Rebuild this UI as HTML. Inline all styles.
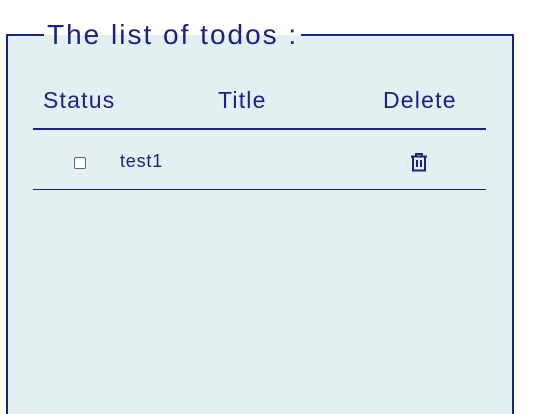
<!DOCTYPE html>
<html><head><style>
html,body{margin:0;padding:0;width:536px;height:406px;background:#fff;overflow:hidden;font-family:"Liberation Sans",sans-serif;color:#1a237e}
.box{position:absolute;left:6px;top:34px;width:508px;height:380px;border:2px solid #1a237e;border-bottom:none;background:#e4eff2;box-sizing:border-box}
.legend{position:absolute;left:44px;top:17px;padding:0 3px;background:linear-gradient(#fff 0 18px,#e4eff2 18px);font-size:28px;line-height:36px;color:#1a237e;letter-spacing:2px}
.t{position:absolute;white-space:nowrap}
.h{font-size:23px;top:87px;letter-spacing:1.2px}
.l1{position:absolute;left:33px;top:128px;width:453px;height:2px;background:#1a237e}
.l2{position:absolute;left:33px;top:189px;width:453px;height:1px;background:#1a237e}
.cb{position:absolute;left:74px;top:157px;width:10px;height:10px;border:1px solid #666;border-radius:2px;background:#fff}
</style></head><body>
<div class="box"></div>
<div class="legend">The list of todos :</div>
<div class="t h" style="left:43px">Status</div>
<div class="t h" style="left:218px">Title</div>
<div class="t h" style="left:383px">Delete</div>
<div class="l1"></div>
<div class="cb"></div>
<div class="t" style="left:120px;top:151px;font-size:18px;letter-spacing:0.8px">test1</div>
<svg style="position:absolute;left:410px;top:152px" width="18" height="20" viewBox="0 0 18 20">
<path d="M1 4.5H17M6 4.5V2H12V4.5M3 4.5V18.5H15V4.5M7 8V15M11 8V15" fill="none" stroke="#1a237e" stroke-width="2"/>
</svg>
<div class="l2"></div>
</body></html>
